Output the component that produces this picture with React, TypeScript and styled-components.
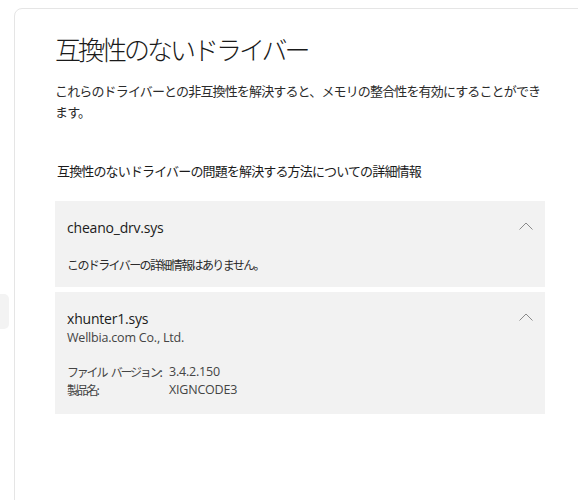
import styled, {createGlobalStyle} from "styled-components";

const GlobalStyle = createGlobalStyle`
  html, body {
    margin: 0;
    padding: 0;
    background: #ffffff;
    overflow: hidden;
  }
  body {
    font-family: "Segoe UI", "Open Sans", "Noto Sans CJK JP", sans-serif;
    color: #1b1b1b;
  }
`

const Page = styled.div`
  display: flex;
  align-items: flex-start;
  width: 578px;
  height: 500px;
  overflow: hidden;
`

const Sidebar = styled.div`
  width: 14px;
  flex-shrink: 0;
  padding-top: 294px;
`

const NavItem = styled.div`
  width: 9px;
  height: 35px;
  background: #f3f3f3;
  border-radius: 0 5px 5px 0;
`

const Card = styled.div`
  flex: 1;
  min-height: 540px;
  margin-top: 8px;
  margin-right: -40px;
  border: 1px solid #e5e5e5;
  border-radius: 8px 0 0 0;
  background: #ffffff;
  padding: 22px 0 0 40px;
`

const Content = styled.div`
  width: 490px;
  display: flex;
  flex-direction: column;
`

const Title = styled.h1`
  margin: 0;
  font-family: "Noto Sans CJK JP", sans-serif;
  font-weight: 300;
  font-size: 26px;
  line-height: 36px;
  letter-spacing: -3px;
  color: #1a1a1a;
`

const Description = styled.p`
  margin: 13px 0 0 0;
  font-family: "Noto Sans CJK JP", sans-serif;
  font-size: 13px;
  line-height: 21px;
  letter-spacing: -0.85px;
  color: #2b2b2b;
`

const LinkHeading = styled.div`
  margin: 39px 0 0 2px;
  font-family: "Noto Sans CJK JP", sans-serif;
  font-size: 13px;
  line-height: 20px;
  letter-spacing: -0.85px;
  color: #1b1b1b;
`

const AccordionList = styled.div`
  margin-top: 20px;
  display: flex;
  flex-direction: column;
  gap: 5px;
`

const Accordion = styled.div<{ $bottom: number }>`
  background: #f2f2f2;
  padding: 17px 12px ${p => p.$bottom}px 12px;
`

const AccordionHeader = styled.div`
  display: flex;
  justify-content: space-between;
  align-items: flex-start;
`

const DriverName = styled.div`
  font-family: "Segoe UI", "Open Sans", sans-serif;
  font-size: 14px;
  line-height: 20px;
  letter-spacing: -0.2px;
  color: #1b1b1b;
`

const Chevron = styled.svg`
  margin-top: 4px;
  flex-shrink: 0;
`

const Note = styled.div`
  margin-top: 18px;
  font-family: "Noto Sans CJK JP", sans-serif;
  font-size: 12px;
  line-height: 18px;
  letter-spacing: -1.6px;
  color: #2b2b2b;
`

const Company = styled.div`
  font-family: "Segoe UI", "Open Sans", sans-serif;
  font-size: 12.5px;
  line-height: 18px;
  letter-spacing: -0.2px;
  color: #444444;
`

const DetailGrid = styled.div`
  margin-top: 16px;
  display: grid;
  grid-template-columns: 102px auto;
`

const DetailLabel = styled.div`
  font-family: "Noto Sans CJK JP", sans-serif;
  font-size: 12px;
  line-height: 18px;
  letter-spacing: -2.2px;
  word-spacing: 4px;
  white-space: pre;
  color: #444444;
`

const DetailValue = styled.div`
  font-family: "Segoe UI", "Open Sans", sans-serif;
  font-size: 12.5px;
  line-height: 18px;
  letter-spacing: -0.2px;
  color: #444444;
`

const ChevronUp = () => (
    <Chevron width="14" height="8" viewBox="0 0 14 8">
        <path d="M0.5 7.5 L7 1 L13.5 7.5" fill="none" stroke="#8a8a8a" strokeWidth="1"/>
    </Chevron>
)

const App = () => {
    return (
        <>
            <GlobalStyle/>
            <Page>
                <Sidebar>
                    <NavItem/>
                </Sidebar>
                <Card>
                    <Content>
                        <Title>互換性のないドライバー</Title>
                        <Description>
                            これらのドライバーとの非互換性を解決すると、メモリの整合性を有効にすることができます。
                        </Description>
                        <LinkHeading>互換性のないドライバーの問題を解決する方法についての詳細情報</LinkHeading>
                        <AccordionList>
                            <Accordion $bottom={13}>
                                <AccordionHeader>
                                    <DriverName>cheano_drv.sys</DriverName>
                                    <ChevronUp/>
                                </AccordionHeader>
                                <Note>このドライバーの詳細情報はありません。</Note>
                            </Accordion>
                            <Accordion $bottom={15}>
                                <AccordionHeader>
                                    <DriverName>xhunter1.sys</DriverName>
                                    <ChevronUp/>
                                </AccordionHeader>
                                <Company>Wellbia.com Co., Ltd.</Company>
                                <DetailGrid>
                                    <DetailLabel>ファイル バージョン:</DetailLabel>
                                    <DetailValue>3.4.2.150</DetailValue>
                                    <DetailLabel>製品名:</DetailLabel>
                                    <DetailValue>XIGNCODE3</DetailValue>
                                </DetailGrid>
                            </Accordion>
                        </AccordionList>
                    </Content>
                </Card>
            </Page>
        </>
    )
}

export default App
